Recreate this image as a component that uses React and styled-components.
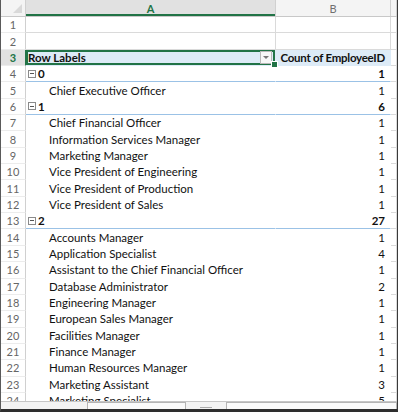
import styled, { createGlobalStyle } from "styled-components";

const GlobalStyle = createGlobalStyle`
  html, body { margin: 0; padding: 0; background: #fff; }
  body { font-family: Lato, "Open Sans", sans-serif; }
`;

const ROW_H = 16.35;
const COLS = "25px 250px 115px 1fr";

const rows = [
  { n: 1, kind: "blank" },
  { n: 2, kind: "blank" },
  { n: 3, kind: "head", label: "Row Labels", value: "Count of EmployeeID" },
  { n: 4, kind: "group", label: "0", value: 1 },
  { n: 5, kind: "item", label: "Chief Executive Officer", value: 1 },
  { n: 6, kind: "group", label: "1", value: 6 },
  { n: 7, kind: "item", label: "Chief Financial Officer", value: 1 },
  { n: 8, kind: "item", label: "Information Services Manager", value: 1 },
  { n: 9, kind: "item", label: "Marketing Manager", value: 1 },
  { n: 10, kind: "item", label: "Vice President of Engineering", value: 1 },
  { n: 11, kind: "item", label: "Vice President of Production", value: 1 },
  { n: 12, kind: "item", label: "Vice President of Sales", value: 1 },
  { n: 13, kind: "group", label: "2", value: 27 },
  { n: 14, kind: "item", label: "Accounts Manager", value: 1 },
  { n: 15, kind: "item", label: "Application Specialist", value: 4 },
  { n: 16, kind: "item", label: "Assistant to the Chief Financial Officer", value: 1 },
  { n: 17, kind: "item", label: "Database Administrator", value: 2 },
  { n: 18, kind: "item", label: "Engineering Manager", value: 1 },
  { n: 19, kind: "item", label: "European Sales Manager", value: 1 },
  { n: 20, kind: "item", label: "Facilities Manager", value: 1 },
  { n: 21, kind: "item", label: "Finance Manager", value: 1 },
  { n: 22, kind: "item", label: "Human Resources Manager", value: 1 },
  { n: 23, kind: "item", label: "Marketing Assistant", value: 3 },
  { n: 24, kind: "item", label: "Marketing Specialist", value: 5 },
];

const Frame = styled.div`
  width: 398px;
  height: 412px;
  box-sizing: border-box;
  border-left: 1px solid #5a5a5a;
  border-right: 1px solid #3a3a3a;
  border-bottom: 3px solid #2e2e2e;
  display: flex;
  flex-direction: column;
  overflow: hidden;
  font-size: 11.5px;
  color: #111;
`;

const Sheet = styled.div`
  height: 401px;
  overflow: hidden;
  flex-shrink: 0;
`;

const HeaderRow = styled.div`
  display: grid;
  grid-template-columns: ${COLS};
  height: 16px;
  border-bottom: 1px solid #c8c8c8;
  background: #f4f4f4;
`;

const Corner = styled.div`
  border-right: 1px solid #d0d0d0;
  position: relative;
  &::after {
    content: "";
    position: absolute;
    right: 3px;
    bottom: 3px;
    border-left: 9px solid transparent;
    border-bottom: 9px solid #d9d9d9;
  }
`;

const ColHead = styled.div`
  display: flex;
  align-items: center;
  justify-content: center;
  font-size: 11px;
  border-right: 1px solid #d0d0d0;
  background: ${(p) => (p.$active ? "#e1e1e1" : "#f4f4f4")};
  color: ${(p) => (p.$active ? "#217346" : "#707070")};
  font-weight: ${(p) => (p.$active ? 700 : 400)};
  box-shadow: ${(p) => (p.$active ? "inset 0 -2px 0 #217346" : "none")};
`;

const Row = styled.div`
  display: grid;
  grid-template-columns: ${COLS};
  height: ${ROW_H}px;
`;

const RowNum = styled.div`
  display: flex;
  align-items: center;
  justify-content: center;
  font-size: 11px;
  background: ${(p) => (p.$active ? "#e1e1e1" : "#fff")};
  color: ${(p) => (p.$active ? "#217346" : "#666")};
  font-weight: ${(p) => (p.$active ? 700 : 400)};
  border-right: 1px solid ${(p) => (p.$active ? "#217346" : "#d0d0d0")};
  border-bottom: 1px solid #ececec;
  box-sizing: border-box;
`;

const Cell = styled.div`
  display: flex;
  align-items: center;
  box-sizing: border-box;
  white-space: nowrap;
  overflow: hidden;
  position: relative;
  padding: 0 ${(p) => (p.$right ? "5px" : "2px")} 0
    ${(p) => (p.$indent ? "23px" : "2px")};
  justify-content: ${(p) => (p.$right ? "flex-end" : "flex-start")};
  font-weight: ${(p) => (p.$bold ? 700 : 400)};
  letter-spacing: ${(p) => (p.$tight ? "-0.25px" : "0")};
  background: ${(p) => (p.$fill ? "#ddebf7" : "#fff")};
  border-right: 1px solid ${(p) => (p.$grid ? "#dadada" : "transparent")};
  border-bottom: 1px solid
    ${(p) => (p.$line ? "#9bc2e6" : p.$grid ? "#dadada" : "transparent")};
`;

const Selected = styled(Cell)`
  overflow: visible;
  box-shadow: inset 0 0 0 2px #217346;
  &::after {
    content: "";
    position: absolute;
    right: -3px;
    bottom: -3px;
    width: 5px;
    height: 5px;
    background: #217346;
    border: 1px solid #fff;
    z-index: 2;
  }
`;

const Label = styled.span`
  flex: 1;
`;

const FilterButton = styled.span`
  width: 10px;
  height: 11px;
  border: 1px solid #b8b8b8;
  background: #f7f7f7;
  display: flex;
  align-items: center;
  justify-content: center;
  margin-right: 1px;
  &::before {
    content: "";
    border-left: 3px solid transparent;
    border-right: 3px solid transparent;
    border-top: 3px solid #777;
  }
`;

const Toggle = styled.span`
  width: 6px;
  height: 6px;
  border: 1px solid #8a8a8a;
  margin-right: 2px;
  display: inline-flex;
  align-items: center;
  justify-content: center;
  &::before {
    content: "";
    width: 4px;
    height: 1px;
    background: #555;
  }
`;

const Strip = styled.div`
  flex: 1;
  border-top: 1px solid #c6c6c6;
  background: #f3f3f3;
  display: flex;
  align-items: flex-start;
  padding-left: 86px;
  gap: 14px;
`;

const StripBox = styled.div`
  width: ${(p) => p.$w}px;
  height: 10px;
  border: 1px solid #b4b4b4;
  border-bottom: none;
  background: #fafafa;
`;

const Dash = styled.div`
  width: 12px;
  height: 1px;
  margin-top: 5px;
  background: #aaa;
`;

function SheetRow({ r }) {
  const active = r.n === 3;
  const grid = r.kind === "blank";
  if (r.kind === "head") {
    return (
      <Row>
        <RowNum $active>{r.n}</RowNum>
        <Selected $bold $fill>
          <Label>{r.label}</Label>
          <FilterButton />
        </Selected>
        <Cell $bold $fill $right $tight>
          {r.value}
        </Cell>
        <Cell $grid />
      </Row>
    );
  }
  const group = r.kind === "group";
  return (
    <Row>
      <RowNum $active={active}>{r.n}</RowNum>
      <Cell $grid={grid} $bold={group} $indent={r.kind === "item"} $line={group}>
        {group && <Toggle />}
        {r.label}
      </Cell>
      <Cell $grid={grid} $bold={group} $right $line={group}>
        {r.value}
      </Cell>
      <Cell $grid />
    </Row>
  );
}

export default function App() {
  return (
    <>
      <GlobalStyle />
      <Frame>
        <Sheet>
          <HeaderRow>
            <Corner />
            <ColHead $active>A</ColHead>
            <ColHead>B</ColHead>
            <ColHead />
          </HeaderRow>
          {rows.map((r) => (
            <SheetRow key={r.n} r={r} />
          ))}
        </Sheet>
        <Strip>
          <StripBox $w={97} />
          <Dash />
          <StripBox $w={170} />
        </Strip>
      </Frame>
    </>
  );
}
